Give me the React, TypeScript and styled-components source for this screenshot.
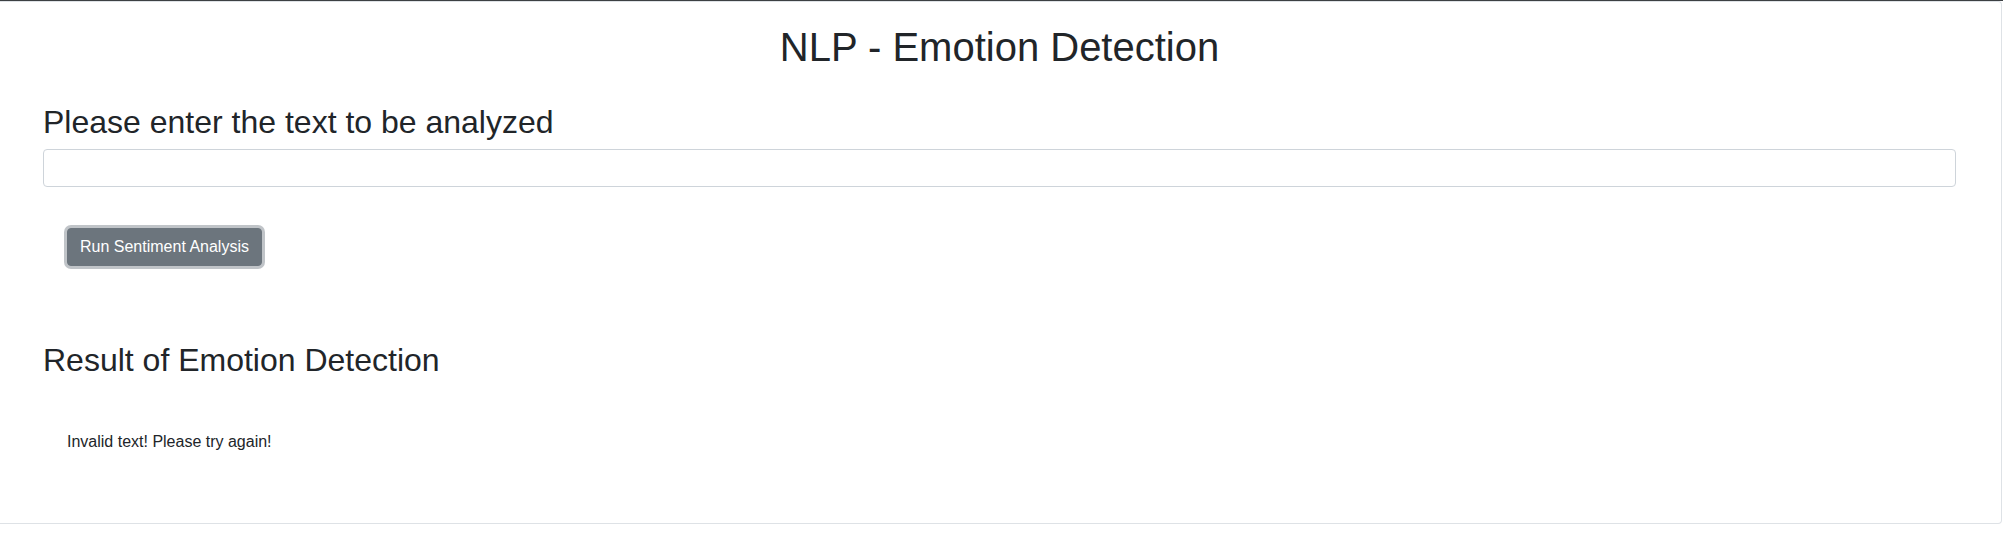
import React, { FC, useState } from "react";
import styled, { createGlobalStyle } from "styled-components";

const GlobalStyle = createGlobalStyle`
  html, body {
    margin: 0;
    padding: 0;
    background: #fff;
  }

  body {
    border-top: 1px solid #3c4043;
    font-family: "Liberation Sans", Arial, sans-serif;
    font-size: 16px;
    line-height: 1.5;
    color: #212529;
  }
`;

const Card = styled.div`
  box-sizing: border-box;
  width: 2002px;
  height: 523px;
  padding: 21px 45px 0 43px;
  border: 1px solid #dee2e6;
  border-left: none;
  border-radius: 0 4px 4px 0;
`;

const Title = styled.h1`
  margin: 0 0 8px;
  font-size: 40px;
  font-weight: 400;
  line-height: 1.2;
  text-align: center;
`;

const Heading = styled.h2<{ $top: number }>`
  margin: ${(props) => props.$top}px 0 8px;
  font-size: 32px;
  font-weight: 400;
  line-height: 1.2;
`;

const TextInput = styled.input`
  display: block;
  box-sizing: border-box;
  width: 100%;
  height: 38px;
  padding: 6px 12px;
  font-family: inherit;
  font-size: 16px;
  color: #495057;
  background: #fff;
  border: 1px solid #ced4da;
  border-radius: 4px;
  outline: none;
`;

const ButtonRow = styled.div`
  padding: 41px 24px 0;
`;

const RunButton = styled.button`
  box-sizing: border-box;
  height: 38px;
  padding: 6px 12px;
  font-family: inherit;
  font-size: 16px;
  line-height: 1.5;
  color: #fff;
  background-color: #6c757d;
  border: 1px solid #6c757d;
  border-radius: 4px;
  box-shadow: 0 0 0 3px rgba(130, 138, 145, 0.5);
  cursor: pointer;
`;

const ResultText = styled.div`
  padding: 0 24px;
  margin-top: 50px;
`;

const App: FC = () => {
  const [text, setText] = useState("");

  return (
    <>
      <GlobalStyle />
      <Card>
        <Title>NLP - Emotion Detection</Title>
        <Heading $top={32}>Please enter the text to be analyzed</Heading>
        <TextInput value={text} onChange={(e) => setText(e.target.value)} />
        <ButtonRow>
          <RunButton>Run Sentiment Analysis</RunButton>
        </ButtonRow>
        <Heading $top={75}>Result of Emotion Detection</Heading>
        <ResultText>Invalid text! Please try again!</ResultText>
      </Card>
    </>
  );
};

export default App;
